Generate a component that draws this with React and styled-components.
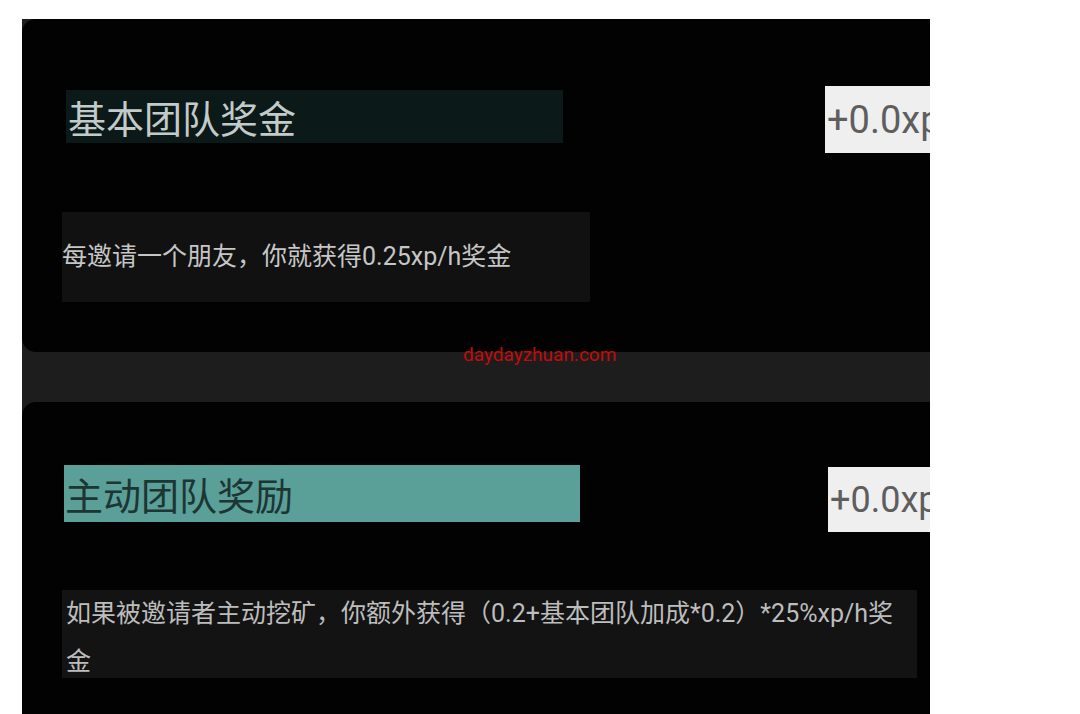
import React from 'react'
import styled, { createGlobalStyle } from 'styled-components'

const GlobalStyle = createGlobalStyle`
  body {
    margin: 0;
    background: #ffffff;
    font-family: Roboto, "Noto Sans CJK SC", sans-serif;
  }
`

const bonuses = [
  {
    id: 'base',
    title: '基本团队奖金',
    value: '+0.0xp/h',
    desc: '每邀请一个朋友，你就获得0.25xp/h奖金',
    active: false,
  },
  {
    id: 'active',
    title: '主动团队奖励',
    value: '+0.0xp/h',
    desc: '如果被邀请者主动挖矿，你额外获得（0.2+基本团队加成*0.2）*25%xp/h奖金',
    active: true,
  },
]

const App = () => {
  return (
    <>
      <GlobalStyle />
      <Screen>
        {bonuses.map((b) => (
          <Card key={b.id} $active={b.active}>
            <HeaderRow>
              <Title $active={b.active}>{b.title}</Title>
              <Value $active={b.active}>{b.value}</Value>
            </HeaderRow>
            <Desc $active={b.active}>{b.desc}</Desc>
          </Card>
        ))}
        <Watermark>daydayzhuan.com</Watermark>
      </Screen>
    </>
  )
}

export default App

const Screen = styled.div`
  position: relative;
  margin: 19px 0 0 22px;
  width: 908px;
  height: 695px;
  background: #1d1d1d;
  overflow: hidden;
  display: flex;
  flex-direction: column;
  gap: 50px;
`

const Card = styled.section`
  flex-shrink: 0;
  background: #020202;
  border-radius: 14px 0 0 14px;
  height: ${(p) => (p.$active ? '330px' : '333px')};
  padding-top: ${(p) => (p.$active ? '63px' : '67px')};
  box-sizing: border-box;
  display: flex;
  flex-direction: column;
  gap: ${(p) => (p.$active ? '58px' : '59px')};
`

const HeaderRow = styled.div`
  display: flex;
  align-items: flex-start;
  justify-content: space-between;
  padding-left: 42px;
`

const Title = styled.h2`
  margin: ${(p) => (p.$active ? '0' : '4px 0 0 2px')};
  box-sizing: border-box;
  width: ${(p) => (p.$active ? '516px' : '497px')};
  height: ${(p) => (p.$active ? '57px' : '53px')};
  padding-left: ${(p) => (p.$active ? '1px' : '2px')};
  display: flex;
  align-items: center;
  font-size: 38px;
  font-weight: 400;
  background: ${(p) => (p.$active ? '#5b9f99' : '#0b1918')};
  color: ${(p) => (p.$active ? '#1d3634' : '#c3caca')};
`

const Value = styled.div`
  flex-shrink: 0;
  box-sizing: border-box;
  width: 150px;
  margin-top: ${(p) => (p.$active ? '2px' : '0')};
  margin-right: ${(p) => (p.$active ? '-48px' : '-45px')};
  height: ${(p) => (p.$active ? '65px' : '67px')};
  padding-left: 2px;
  display: flex;
  align-items: center;
  white-space: nowrap;
  background: #efefef;
  color: #5e5e5e;
  font-size: ${(p) => (p.$active ? '36px' : '38px')};
`

const Desc = styled.p`
  margin: 0 0 0 40px;
  box-sizing: border-box;
  width: ${(p) => (p.$active ? '855px' : '528px')};
  height: ${(p) => (p.$active ? '88px' : '90px')};
  padding: ${(p) => (p.$active ? '0 8px 0 4px' : '0')};
  display: ${(p) => (p.$active ? 'block' : 'flex')};
  align-items: center;
  font-size: 25px;
  line-height: ${(p) => (p.$active ? '48px' : '1.2')};
  background: ${(p) => (p.$active ? '#131313' : '#111111')};
  color: ${(p) => (p.$active ? '#bdbdbd' : '#c6c6c6')};
`

const Watermark = styled.span`
  position: absolute;
  top: 324px;
  left: 441px;
  font-family: Roboto, "Liberation Sans", sans-serif;
  font-size: 19px;
  color: #c40a0a;
`
